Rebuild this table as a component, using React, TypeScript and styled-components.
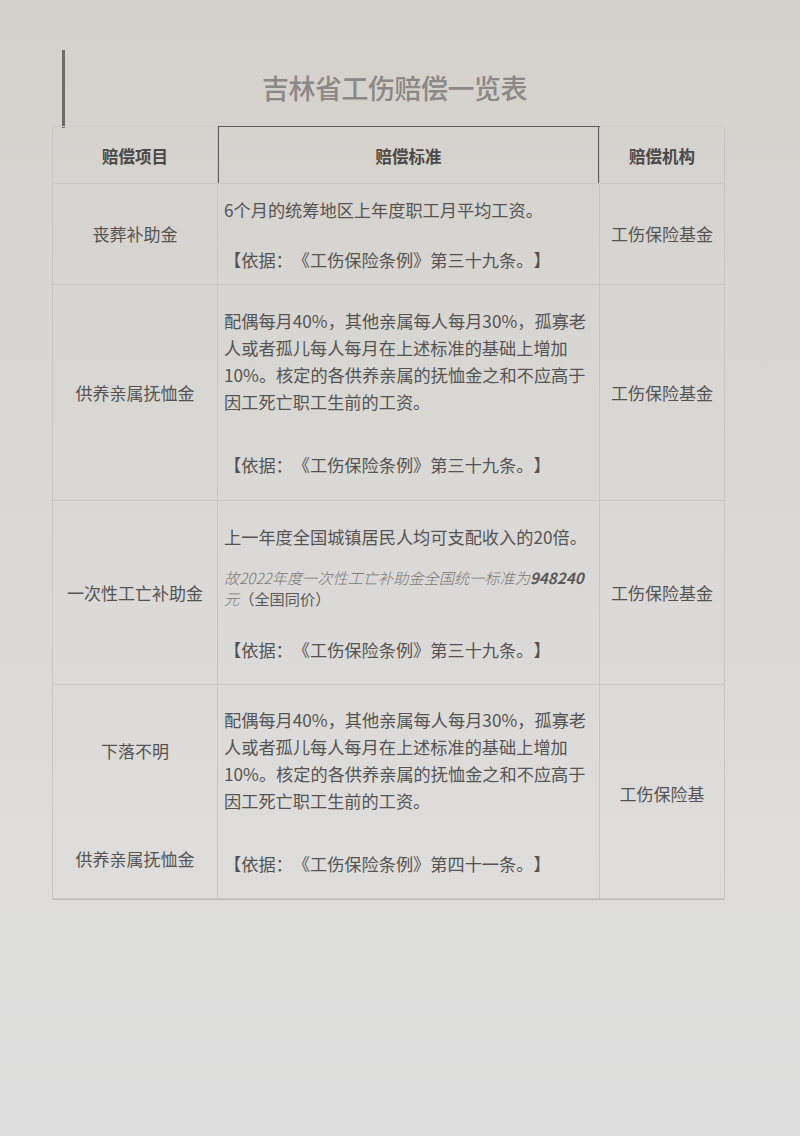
import styled, { createGlobalStyle } from 'styled-components';

const GlobalStyle = createGlobalStyle`
  html, body {
    margin: 0;
    padding: 0;
  }

  body {
    width: 800px;
    min-height: 1136px;
    background: linear-gradient(180deg, #d4d1cc 0%, #d9d7d4 35%, #dddcdb 70%, #dfdfdf 100%);
    font-family: "Noto Sans CJK SC", "Noto Sans", sans-serif;
    color: #505050;
    text-spacing-trim: space-all;
  }
`;

type Row = {
  item: string[];
  lines: string[];
  extra?: 'award';
  basis: string;
  gap: number;
  height: number;
  agency: string;
};

const rows: Row[] = [
  {
    item: ['丧葬补助金'],
    lines: ['6个月的统筹地区上年度职工月平均工资。'],
    basis: '【依据：《工伤保险条例》第三十九条。】',
    gap: 24,
    height: 101,
    agency: '工伤保险基金',
  },
  {
    item: ['供养亲属抚恤金'],
    lines: [
      '配偶每月40%，其他亲属每人每月30%，孤寡老',
      '人或者孤儿每人每月在上述标准的基础上增加',
      '10%。核定的各供养亲属的抚恤金之和不应高于',
      '因工死亡职工生前的工资。',
    ],
    basis: '【依据：《工伤保险条例》第三十九条。】',
    gap: 37,
    height: 216,
    agency: '工伤保险基金',
  },
  {
    item: ['一次性工亡补助金'],
    lines: ['上一年度全国城镇居民人均可支配收入的20倍。'],
    extra: 'award',
    basis: '【依据：《工伤保险条例》第三十九条。】',
    gap: 17,
    height: 184,
    agency: '工伤保险基金',
  },
  {
    item: ['下落不明', '供养亲属抚恤金'],
    lines: [
      '配偶每月40%，其他亲属每人每月30%，孤寡老',
      '人或者孤儿每人每月在上述标准的基础上增加',
      '10%。核定的各供养亲属的抚恤金之和不应高于',
      '因工死亡职工生前的工资。',
    ],
    basis: '【依据：《工伤保险条例》第四十一条。】',
    gap: 37,
    height: 214,
    agency: '工伤保险基',
  },
];

export default function App() {
  return (
    <>
      <GlobalStyle />
      <Page>
        <TitleBlock>
          <Title>吉林省工伤赔偿一览表</Title>
        </TitleBlock>
        <Table $rows={rows.map((r) => r.height)}>
          <HeadCell>赔偿项目</HeadCell>
          <HeadCell $framed>赔偿标准</HeadCell>
          <HeadCell>赔偿机构</HeadCell>

          {rows.map((row, i) => (
            <Fragment key={i}>
              <ItemCell $split={row.item.length > 1}>
                {row.item.map((t) => (
                  <span key={t}>{t}</span>
                ))}
              </ItemCell>
              <StandardCell $gap={row.gap}>
                <Lines>
                  {row.lines.map((l) => (
                    <Line key={l}>{l}</Line>
                  ))}
                </Lines>
                {row.extra === 'award' && (
                  <Award>
                    <Line>
                      <Faint>故2022年度一次性工亡补助金全国统一标准为</Faint>
                      <Amount>948240</Amount>
                    </Line>
                    <Line>
                      <Faint>元</Faint>（全国同价）
                    </Line>
                  </Award>
                )}
                <Basis $extra={row.extra === 'award'}>{row.basis}</Basis>
              </StandardCell>
              <AgencyCell $shift={row.item.length > 1}>{row.agency}</AgencyCell>
            </Fragment>
          ))}
        </Table>
      </Page>
    </>
  );
}

const Fragment = ({ children }: { children: React.ReactNode }) => <>{children}</>;

const Page = styled.div`
  display: flex;
  flex-direction: column;
  padding: 50px 0 0 52px;
`;

const TitleBlock = styled.div`
  width: 662px;
  height: 78px;
  margin-left: 10px;
  margin-bottom: -2px;
  border-left: 3px solid #6f6c69;
  display: flex;
  align-items: center;
  justify-content: center;
  padding-bottom: 4px;
  box-sizing: border-box;
`;

const Title = styled.h1`
  margin: 0;
  font-size: 27px;
  font-weight: 500;
  letter-spacing: -0.5px;
  color: #8b8885;
`;

const Table = styled.div<{ $rows: number[] }>`
  display: grid;
  grid-template-columns: 165px 382px 125px;
  grid-template-rows: 57px ${(p) => p.$rows.map((h) => `${h}px`).join(' ')};
  width: 672px;
  border-top: 1px solid #cdcbc8;
  border-left: 1px solid #c9c7c4;
  border-bottom: 1px solid #bdbcba;
  box-sizing: border-box;
`;

const Cell = styled.div`
  border-right: 1px solid #c8c6c3;
  border-bottom: 1px solid #cac8c5;
  display: flex;
  box-sizing: border-box;
  font-size: 17px;
  line-height: 26px;
  color: #555352;
  min-width: 0;
`;

const HeadCell = styled(Cell)<{ $framed?: boolean }>`
  align-items: center;
  justify-content: center;
  font-size: 16.5px;
  font-weight: 700;
  color: #4b4948;
  padding-top: 2px;
  ${(p) =>
    p.$framed &&
    `
    box-shadow: inset 1px 0 0 #5c5a58, inset -1px 0 0 #5c5a58, 0 -1px 0 #5c5a58;
  `}
`;

const ItemCell = styled(Cell)<{ $split: boolean }>`
  flex-direction: column;
  align-items: center;
  justify-content: center;
  gap: ${(p) => (p.$split ? '82px' : '0')};
  padding-top: ${(p) => (p.$split ? '26px' : '0')};
`;

const StandardCell = styled(Cell)<{ $gap: number }>`
  flex-direction: column;
  justify-content: center;
  gap: ${(p) => p.$gap}px;
  padding-left: 6px;
  font-size: 17.2px;
  overflow: visible;
`;

const Lines = styled.div`
  display: flex;
  flex-direction: column;
  line-height: 27px;
`;

const Line = styled.span`
  white-space: nowrap;
`;

const Award = styled.div`
  display: flex;
  flex-direction: column;
  line-height: 21px;
  font-size: 15.2px;
  color: #5a5856;
`;

const Faint = styled.span`
  font-style: italic;
  font-weight: 300;
  color: #7a7775;
`;

const Amount = styled.span`
  font-style: italic;
  font-weight: 700;
  color: #5b5957;
`;

const Basis = styled.span<{ $extra: boolean }>`
  white-space: nowrap;
  margin-top: ${(p) => (p.$extra ? '11px' : '0')};
`;

const AgencyCell = styled(Cell)<{ $shift: boolean }>`
  align-items: center;
  justify-content: center;
  padding-top: ${(p) => (p.$shift ? '4px' : '0')};
`;
